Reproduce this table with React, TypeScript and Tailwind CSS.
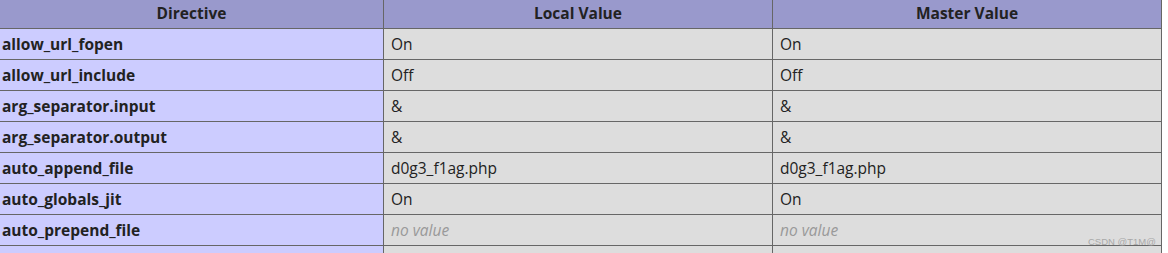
const FONT = "font-['Segoe_UI','Open_Sans','Noto_Sans',sans-serif]";

type Row = { directive: string; local: string; master: string; empty?: boolean };

const rows: Row[] = [
  { directive: "allow_url_fopen", local: "On", master: "On" },
  { directive: "allow_url_include", local: "Off", master: "Off" },
  { directive: "arg_separator.input", local: "&", master: "&" },
  { directive: "arg_separator.output", local: "&", master: "&" },
  { directive: "auto_append_file", local: "d0g3_f1ag.php", master: "d0g3_f1ag.php" },
  { directive: "auto_globals_jit", local: "On", master: "On" },
  { directive: "auto_prepend_file", local: "no value", master: "no value", empty: true },
];

const gridCols = "grid grid-cols-[384px_389px_388px]";

function ValueCell({ value, empty, last }: { value: string; empty?: boolean; last?: boolean }) {
  return (
    <div
      className={`flex items-center bg-[#dddddd] pl-[7px] pt-[2px] text-[15.5px] ${
        last ? "" : "border-r border-[#666]"
      } ${empty ? "italic text-[#999]" : "text-[#222]"}`}
    >
      {value}
    </div>
  );
}

export default function App() {
  return (
    <div className={`relative h-[253px] w-[1168px] overflow-hidden bg-white ${FONT}`}>
      <div className="w-[1162px] border-r border-[#666]">
        <div className={`${gridCols} h-[29px] border-b border-[#666] bg-[#9999cc] text-[15.5px] font-bold text-[#222]`}>
          <div className="flex items-center justify-center border-r border-[#666]">Directive</div>
          <div className="flex items-center justify-center border-r border-[#666]">Local Value</div>
          <div className="flex items-center justify-center">Master Value</div>
        </div>

        {rows.map((row) => (
          <div className={`${gridCols} h-[31px] border-b border-[#666]`} key={row.directive}>
            <div className="flex items-center border-r border-[#666] bg-[#ccccff] pl-[2px] pt-[2px] text-[15.5px] font-bold text-[#222]">
              {row.directive}
            </div>
            <ValueCell value={row.local} empty={row.empty} />
            <ValueCell value={row.master} empty={row.empty} last />
          </div>
        ))}

        <div className={`${gridCols} h-[31px]`}>
          <div className="border-r border-[#666] bg-[#ccccff]" />
          <div className="border-r border-[#666] bg-[#dddddd]" />
          <div className="bg-[#dddddd]" />
        </div>
      </div>

      <span className="absolute left-[1088px] top-[235px] font-['Liberation_Sans',sans-serif] text-[9.5px] text-[#a8a8a8]">
        CSDN @T1M@
      </span>
    </div>
  );
}
